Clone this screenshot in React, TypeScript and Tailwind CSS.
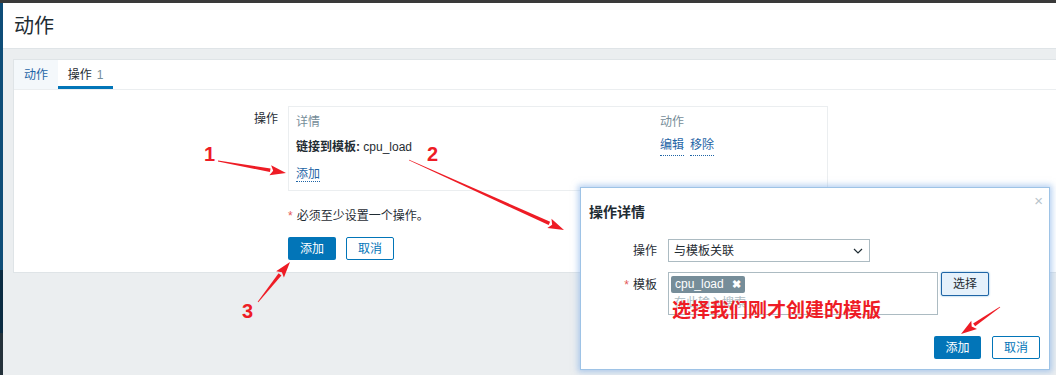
import React from "react";

const font = { fontFamily: '"Liberation Sans", "Noto Sans CJK SC", sans-serif' };

function Arrow({ x1, y1, x2, y2 }: { x1: number; y1: number; x2: number; y2: number }) {
  const dx = x2 - x1;
  const dy = y2 - y1;
  const len = Math.hypot(dx, dy);
  const ux = dx / len;
  const uy = dy / len;
  const nx = -uy;
  const ny = ux;
  const head = 16;
  const bx = x2 - ux * head;
  const by = y2 - uy * head;
  const shaft = [
    [x1 + nx * 0.4, y1 + ny * 0.4],
    [bx + nx * 1.8, by + ny * 1.8],
    [bx - nx * 1.8, by - ny * 1.8],
    [x1 - nx * 0.4, y1 - ny * 0.4],
  ];
  const tip = [
    [x2, y2],
    [bx + nx * 5, by + ny * 5],
    [bx + ux * 3, by + uy * 3],
    [bx - nx * 5, by - ny * 5],
  ];
  const pts = (p: number[][]) => p.map((q) => q.join(",")).join(" ");
  return (
    <g fill="#ee1c25">
      <polygon points={pts(shaft)} />
      <polygon points={pts(tip)} />
    </g>
  );
}

function LinkText({ children }: { children: React.ReactNode }) {
  return <span className="text-[#1f65a6] border-b border-dotted border-[#1f65a6] leading-[14px]">{children}</span>;
}

function Modal() {
  return (
    <div className="absolute left-[580px] top-[187px] w-[470px] h-[183px] bg-white border border-[#9ec3e6] shadow-[0_0_6px_2px_rgba(120,170,230,0.55)] text-[12px] text-[#1f2c33]">
      <div className="absolute right-[6px] top-[5px] text-[#b7c4cb] text-[15px] leading-none">×</div>
      <div className="pl-[8px] pt-[14px] text-[14px] font-bold text-[#1f2c33]">操作详情</div>
      <div className="mt-[16px] flex flex-col gap-[10px]">
        <div className="flex items-center">
          <div className="w-[76px] text-right">操作</div>
          <div className="ml-[11px] w-[202px] h-[23px] border border-[#acbbc2] flex items-center justify-between px-[5px]">
            <span>与模板关联</span>
            <svg width="12" height="12" viewBox="0 0 12 12" fill="none" stroke="#1f2c33" strokeWidth="1.2">
              <path d="M2 4l4 4 4-4" />
            </svg>
          </div>
        </div>
        <div className="flex items-start">
          <div className="w-[76px] text-right pt-[4px]">
            <span className="text-[#e45959] mr-[4px]">*</span>模板
          </div>
          <div className="ml-[11px] w-[270px] h-[43px] border border-[#acbbc2] p-[2px]">
            <div className="inline-flex items-center h-[17px] bg-[#768d99] text-white px-[4px] gap-[8px] rounded-[2px]">
              <span>cpu_load</span>
              <span className="text-[11px] font-bold">✖</span>
            </div>
            <div className="text-[#acbbc2] pl-[3px] mt-[1px]">在此输入搜索</div>
          </div>
          <div className="ml-[3px] w-[48px] h-[24px] border border-[#1f65a6] bg-[#e5f1fb] rounded-[2px] flex items-center justify-center shadow-[0_0_2px_rgba(2,117,184,0.6)]">
            选择
          </div>
        </div>
      </div>
      <div className="absolute left-[353px] top-[148px] flex gap-[11px]">
        <div className="w-[47px] h-[23px] bg-[#0275b8] text-white flex items-center justify-center rounded-[2px]">添加</div>
        <div className="w-[48px] h-[23px] border border-[#0275b8] text-[#0275b8] flex items-center justify-center rounded-[2px]">取消</div>
      </div>
    </div>
  );
}

export default function App() {
  return (
    <div className="relative w-[1056px] h-[375px] overflow-hidden bg-[#ebeef0]" style={font}>
      <div className="h-[3px] bg-[#3a3a3a]" />
      <div className="flex h-[372px]">
        <div className="w-[3px] flex flex-col">
          <div className="h-[267px] bg-[#0e4d78]" />
          <div className="h-[63px] bg-[#0b2b42]" />
          <div className="flex-1 bg-[#24313a]" />
        </div>
        <div className="flex-1 flex flex-col">
          <div className="h-[46px] bg-white border-b border-[#dfe4e7] flex items-center pl-[11px]">
            <h1 className="text-[20px] text-[#1f2c33] font-normal">动作</h1>
          </div>
          <div className="pt-[10px] pl-[10px]">
            <div className="bg-white border border-[#dfe4e7] border-r-0 h-[214px] text-[12px] text-[#1f2c33]">
              <div className="flex h-[30px] border-b border-[#ebeef0]">
                <div className="w-[44px] bg-[#f4f8fb] text-[#1f65a6] flex items-center justify-center">动作</div>
                <div className="w-[55px] flex items-center justify-center border-b-[3px] border-[#0275b8] pt-[3px]">
                  操作<span className="ml-[5px] text-[#768d99]">1</span>
                </div>
              </div>
              <div className="flex pt-[16px]">
                <div className="w-[264px] text-right pt-[4px]">操作</div>
                <div className="ml-[10px] flex flex-col">
                  <div className="w-[540px] h-[85px] border border-[#ebeef0] px-[7px] pt-[6px]">
                    <div className="flex text-[#768d99]">
                      <div className="w-[364px]">详情</div>
                      <div>动作</div>
                    </div>
                    <div className="flex mt-[7px]">
                      <div className="w-[364px]">
                        <span className="font-bold">链接到模板:</span> cpu_load
                      </div>
                      <div className="flex gap-[6px]">
                        <LinkText>编辑</LinkText>
                        <LinkText>移除</LinkText>
                      </div>
                    </div>
                    <div className="mt-[9px]">
                      <LinkText>添加</LinkText>
                    </div>
                  </div>
                  <div className="mt-[16px]">
                    <span className="text-[#e45959] mr-[4px]">*</span>必须至少设置一个操作。
                  </div>
                  <div className="flex gap-[10px] mt-[12px]">
                    <div className="w-[48px] h-[23px] bg-[#0275b8] text-white flex items-center justify-center rounded-[2px]">添加</div>
                    <div className="w-[48px] h-[23px] border border-[#0275b8] text-[#0275b8] flex items-center justify-center rounded-[2px]">取消</div>
                  </div>
                </div>
              </div>
            </div>
          </div>
        </div>
      </div>

      <Modal />

      <svg className="absolute inset-0 pointer-events-none" width="1056" height="375">
        <Arrow x1={218} y1={161} x2={286} y2={173} />
        <Arrow x1={409} y1={160} x2={564} y2={230} />
        <Arrow x1={258} y1={302} x2={290} y2={262} />
        <Arrow x1={1000} y1={307} x2={961} y2={334} />
        <g fill="#ee1c25" fontWeight="bold" fontSize="20" fontFamily='"Liberation Sans", sans-serif'>
          <text x="204" y="161">1</text>
          <text x="427" y="161">2</text>
          <text x="242" y="318">3</text>
        </g>
      </svg>
      <div className="absolute left-[672px] top-[301px] text-[19px] font-bold text-[#ee1c25] leading-none pointer-events-none">
        选择我们刚才创建的模版
      </div>
    </div>
  );
}
